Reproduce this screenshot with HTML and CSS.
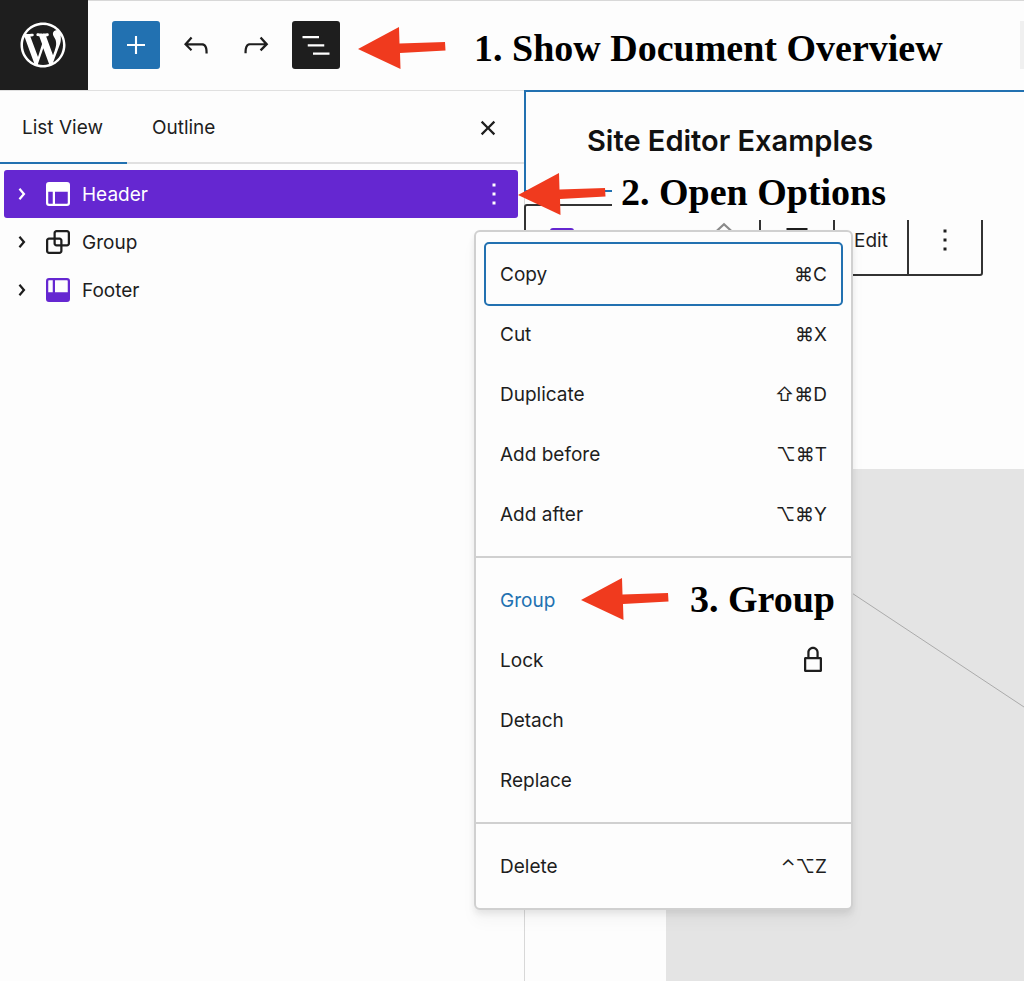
FILE: index.html
```html
<!DOCTYPE html>
<html lang="en">
<head>
<meta charset="utf-8">
<meta name="viewport" content="width=device-width, initial-scale=1">
<title>Site Editor</title>
<link rel="stylesheet" href="styles.css">
</head>
<body>
<svg class="defs" aria-hidden="true">
  <symbol id="chevron" viewBox="0 0 24 24"><path d="M10.86 8.04 14.28 12.03 10.86 16.02 9.72 15.04 12.3 12.03 9.72 9.02Z"/></symbol>
  <symbol id="header" viewBox="0 0 24 24"><path fill-rule="evenodd" d="M18.5 10.5H10v8h8a.5.5 0 00.5-.5v-7.5zm-10 0h-3V18a.5.5 0 00.5.5h2.5v-8zM6 4h12a2 2 0 012 2v12a2 2 0 01-2 2H6a2 2 0 01-2-2V6a2 2 0 012-2z"/></symbol>
  <symbol id="more" viewBox="0 0 24 24"><path d="M13 19h-2v-2h2v2zm0-6h-2v-2h2v2zm0-6h-2V5h2v2z"/></symbol>
  <symbol id="arrow" viewBox="0 0 88 42"><path d="M0 22 41 0 41.500 16.500 87 15 87.500 23.500 42 26 42.500 42Z"/></symbol>
</svg>
<div class="app">
  <header class="topbar">
    <a class="logo" href="#" aria-label="WordPress">
      <svg viewBox="-2 -2 24 24"><path d="M20 10c0-5.51-4.49-10-10-10C4.48 0 0 4.49 0 10c0 5.52 4.48 10 10 10 5.51 0 10-4.48 10-10zM7.78 15.37L4.37 6.22c.55-.02 1.17-.08 1.17-.08.5-.06.44-1.13-.06-1.11 0 0-1.45.11-2.37.11-.18 0-.37 0-.58-.01C4.12 2.69 6.87 1.11 10 1.11c2.33 0 4.45.87 6.05 2.34-.68-.11-1.65.39-1.65 1.58 0 .74.45 1.36.9 2.1.35.61.55 1.36.55 2.46 0 1.49-1.4 5-1.4 5l-3.03-8.37c.54-.02.82-.17.82-.17.5-.05.44-1.25-.06-1.22 0 0-1.44.12-2.38.12-.87 0-2.33-.12-2.33-.12-.5-.03-.56 1.2-.06 1.22l.92.08 1.26 3.41zM17.41 10c.24-.64.74-1.87.43-4.25.7 1.29 1.05 2.71 1.05 4.25 0 3.29-1.73 6.24-4.4 7.78.97-2.59 1.94-5.2 2.92-7.78zM6.1 18.09C3.12 16.65 1.11 13.53 1.11 10c0-1.3.23-2.48.72-3.59C3.25 10.3 4.67 14.2 6.1 18.09zm4.03-6.63l2.58 6.98c-.86.29-1.76.45-2.71.45-.79 0-1.57-.11-2.29-.33.81-2.38 1.62-4.74 2.42-7.1z"/></svg>
    </a>
    <div class="tools">
      <button class="tool primary" aria-label="Add block"><svg class="icon" viewBox="0 0 24 24"><path d="M11.300 6h1.400v5.300H18v1.400h-5.300V18h-1.400v-5.300H6v-1.400h5.300z"/></svg></button>
      <button class="tool" aria-label="Undo"><svg class="icon" viewBox="0 0 24 24"><path d="M18.3 11.7c-.6-.6-1.4-.9-2.3-.9H6.700l2.900-3.300-1.100-1-4.500 5L8.500 16l1-1-2.700-2.700H16c.5 0 .9.2 1.300.5 1 1 1 3.400 1 4.500v.3h1.500v-.2c0-1.500 0-4.300-1.500-5.700z"/></svg></button>
      <button class="tool" aria-label="Redo"><svg class="icon" viewBox="0 0 24 24"><path d="M15.600 6.500l-1.100 1 2.900 3.300H8c-.9 0-1.700.3-2.300.9-1.400 1.500-1.400 4.200-1.400 5.600v.2h1.500v-.3c0-1.100 0-3.500 1-4.500.3-.3.7-.5 1.300-.5h9.200L14.500 15l1.100 1.100 4.600-4.600-4.600-5z"/></svg></button>
      <button class="tool pressed" aria-label="Document Overview"><svg class="icon" viewBox="0 0 24 24"><path d="M3 6h11v1.500H3V6Zm3.500 5.500h11V13h-11v-1.500ZM21 17H10v1.500h11V17Z"/></svg></button>
    </div>
    <div class="note note-overview"><svg class="arrow"><use href="#arrow"/></svg><span>1. Show Document Overview</span></div>
    <div class="title-field"></div>
  </header>

  <div class="workspace">
    <aside class="sidebar">
      <div class="tabs" role="tablist">
        <button class="tab active" role="tab" aria-selected="true">List View</button>
        <button class="tab" role="tab" aria-selected="false">Outline</button>
        <button class="close" aria-label="Close"><svg class="icon" viewBox="0 0 24 24"><path d="M12 13.060l3.712 3.713 1.061-1.060L13.061 12l3.712-3.712-1.060-1.060L12 10.938 8.288 7.227l-1.061 1.060L10.939 12l-3.712 3.712 1.060 1.061L12 13.061z"/></svg></button>
      </div>
      <ul class="blocks">
        <li class="block selected">
          <button class="block-link"><svg class="icon"><use href="#chevron"/></svg><svg class="icon"><use href="#header"/></svg><span>Header</span></button>
          <button class="block-more" aria-label="Options for Header"><svg class="icon"><use href="#more"/></svg></button>
        </li>
        <li class="block">
          <button class="block-link"><svg class="icon"><use href="#chevron"/></svg><svg class="icon" viewBox="0 0 24 24"><path d="M18 4h-7c-1.100 0-2 .9-2 2v3H6c-1.100 0-2 .9-2 2v7c0 1.100.9 2 2 2h7c1.100 0 2-.9 2-2v-3h3c1.100 0 2-.9 2-2V6c0-1.100-.9-2-2-2zm-4.500 14c0 .3-.2.5-.5.5H6c-.3 0-.5-.2-.5-.5v-7c0-.3.2-.5.5-.5h3V13c0 1.100.9 2 2 2h2.500v3zm0-4.500H11c-.3 0-.5-.2-.5-.5v-2.500H13c.3 0 .5.2.5.5v2.500zm5-.5c0 .3-.2.5-.5.5h-3V11c0-1.100-.9-2-2-2h-2.500V6c0-.3.2-.5.5-.5h7c.3 0 .5.2.5.5v7z"/></svg><span>Group</span></button>
        </li>
        <li class="block">
          <button class="block-link"><svg class="icon"><use href="#chevron"/></svg><svg class="icon purple" viewBox="0 0 24 24"><path fill-rule="evenodd" d="M18 5.500h-8v8h8.500V6a.5.5 0 00-.5-.5zm-9.500 8h-3V6a.5.5 0 01.5-.5h2.500v8zM6 4h12a2 2 0 012 2v12a2 2 0 01-2 2H6a2 2 0 01-2-2V6a2 2 0 012-2z"/></svg><span>Footer</span></button>
        </li>
      </ul>
    </aside>

    <main class="canvas">
      <div class="site-header"><h1>Site Editor Examples</h1></div>
      <div class="block-toolbar">
        <div class="segment wide">
          <svg class="icon purple"><use href="#header"/></svg>
          <svg class="icon mover" viewBox="0 0 24 24"><path d="M6 7 12 1.500 18 7"/></svg>
        </div>
        <button class="segment" aria-label="Align"><svg class="icon" viewBox="0 0 24 24"><path d="M5 4h14v1.500H5zM5 18.500h14V20H5z"/></svg></button>
        <button class="segment"><span>Edit</span></button>
        <button class="segment" aria-label="Options"><svg class="icon"><use href="#more"/></svg></button>
      </div>
      <div class="placeholder"><svg viewBox="0 0 358 512" preserveAspectRatio="xMinYMin slice"><path d="M0 1 358 238"/></svg></div>
    </main>
  </div>

  <div class="note note-options"><svg class="arrow"><use href="#arrow"/></svg><span>2. Open Options</span></div>

  <div class="menu" role="menu">
    <div class="menu-group">
      <button class="item focused" role="menuitem"><span>Copy</span><kbd>⌘C</kbd></button>
      <button class="item" role="menuitem"><span>Cut</span><kbd>⌘X</kbd></button>
      <button class="item" role="menuitem"><span>Duplicate</span><kbd>⇧⌘D</kbd></button>
      <button class="item" role="menuitem"><span>Add before</span><kbd>⌥⌘T</kbd></button>
      <button class="item" role="menuitem"><span>Add after</span><kbd>⌥⌘Y</kbd></button>
    </div>
    <div class="menu-group">
      <button class="item current" role="menuitem"><span>Group</span></button>
      <button class="item" role="menuitem"><span>Lock</span><svg class="icon lock" viewBox="0 0 24 24"><path fill-rule="evenodd" d="M17 10h-1.200V7c0-2.100-1.700-3.800-3.800-3.800-2.100 0-3.800 1.700-3.800 3.800v3H7c-.6 0-1 .4-1 1v8c0 .6.4 1 1 1h10c.6 0 1-.4 1-1v-8c0-.6-.4-1-1-1zm-7.300-3c0-1.300 1-2.300 2.300-2.300s2.300 1 2.300 2.300v3H9.700V7zm6.800 11.500h-9v-7h9v7z"/></svg></button>
      <button class="item" role="menuitem"><span>Detach</span></button>
      <button class="item" role="menuitem"><span>Replace</span></button>
    </div>
    <div class="menu-group">
      <button class="item" role="menuitem"><span>Delete</span><kbd>⌃⌥Z</kbd></button>
    </div>
    <div class="note note-group"><svg class="arrow"><use href="#arrow"/></svg><span>3. Group</span></div>
  </div>
</div>
</body>
</html>
```
FILE: styles.css
```css
:root {
  --ink: #1e1e1e;
  --paper: #fdfdfd;
  --blue: #2271b1;
  --purple: #6527d1;
  --line: #e0e0e0;
}

* { box-sizing: border-box; }

body {
  margin: 0;
  background: var(--paper);
  color: var(--ink);
  font-family: Inter, "Liberation Sans", sans-serif;
  font-size: 19px;
  line-height: 28px;
}

button {
  margin: 0;
  padding: 0;
  border: 0;
  background: none;
  color: inherit;
  font: inherit;
}

.defs { display: none; }

.icon {
  display: block;
  flex: none;
  width: 36px;
  height: 36px;
  fill: currentColor;
}

.purple { color: var(--purple); }

.app {
  position: relative;
  display: flex;
  flex-direction: column;
  min-height: 100vh;
  overflow: hidden;
}

/* Top bar */
.topbar {
  display: flex;
  align-items: center;
  height: 91px;
  padding-bottom: 1px;
  border-top: 1px solid #d8d8d8;
  border-bottom: 1px solid var(--line);
}

.logo {
  display: flex;
  align-items: center;
  justify-content: center;
  align-self: flex-start;
  flex: none;
  width: 88px;
  height: 90px;
  margin-top: -1px;
  padding-right: 2px;
  background: var(--ink);
}

.logo svg { width: 54px; height: 54px; fill: #fff; }

.tools { display: flex; gap: 12px; margin-left: 24px; }

.tool {
  display: flex;
  align-items: center;
  justify-content: center;
  width: 48px;
  height: 48px;
  border-radius: 3px;
}

.tool.primary { background: var(--blue); color: #fff; }
.tool.pressed { background: var(--ink); color: #fff; }

.title-field {
  flex: none;
  width: 4px;
  height: 48px;
  margin-left: auto;
  background: #f0f0f0;
}

/* Annotations */
.note {
  display: flex;
  align-items: center;
  color: #000;
  font-family: "Liberation Serif", serif;
  font-size: 38px;
  font-weight: 700;
  line-height: 44px;
  white-space: nowrap;
}

.arrow { flex: none; width: 88px; height: 42px; fill: #f03a1e; }

.note-overview { gap: 28px; margin-left: 18px; padding-top: 6px; }

.note-options {
  position: absolute;
  top: 168px;
  left: 518px;
  right: 0;
}

.note-options span {
  flex: 1;
  align-self: stretch;
  margin-left: 6px;
  padding: 2px 0 6px 9px;
  background: var(--paper);
}

.note-group { position: absolute; top: 345px; left: 105px; gap: 21px; }

/* Sidebar */
.workspace { display: flex; flex: 1; }

.sidebar {
  flex: 0 0 525px;
  border-right: 1px solid #d8d8d8;
}

.tabs {
  display: flex;
  height: 73px;
  border-bottom: 2px solid var(--line);
}

.tab { height: 73px; padding: 0 24px 0 22px; }
.tab + .tab { padding-left: 25px; }
.tab.active { box-shadow: inset 0 -2px var(--blue); }

.close { margin: 2px 18px 0 auto; }

.blocks { margin: 0; padding: 6px 6px 0 4px; list-style: none; }

.block {
  display: flex;
  align-items: center;
  height: 48px;
  border-radius: 3px;
}

.block.selected { background: var(--purple); color: #fff; }

.block-link { display: flex; flex: 1; align-items: center; }
.block-link span { margin-left: 6px; }
.block-more { padding-right: 6px; }

.block-link span,
.segment span,
.item span,
.item kbd { padding-top: 2px; }

/* Canvas */
.canvas {
  display: flex;
  flex: 1;
  flex-direction: column;
  min-width: 0;
  margin-left: -1px;
}

.site-header {
  height: 102px;
  margin-top: -1px;
  padding: 31px 0 0 61px;
  border: solid var(--blue);
  border-width: 2px 0 2px 2px;
}

.site-header h1 {
  margin: 0;
  color: #111;
  font-size: 29px;
  font-weight: 600;
  line-height: 36px;
  white-space: nowrap;
}

.block-toolbar {
  display: flex;
  align-self: flex-start;
  height: 72px;
  margin-top: 12px;
  border: 2px solid #333;
  border-radius: 3px;
}

.segment {
  display: flex;
  align-items: center;
  justify-content: center;
  width: 74px;
}

.segment + .segment { border-left: 2px solid #333; }

.segment.wide {
  justify-content: space-between;
  width: 233px;
  padding: 0 17px 0 18px;
}

.mover { fill: none; stroke: #8a8a8a; stroke-width: 1.5; }

.placeholder {
  flex: 1;
  margin: 193px 0 0 142px;
  background: #e4e4e4;
}

.placeholder svg { display: block; width: 100%; }
.placeholder path { stroke: #ababab; }

/* Options menu */
.menu {
  position: absolute;
  top: 230px;
  left: 474px;
  width: 379px;
  border: 2px solid #d0d0d0;
  border-radius: 6px;
  background: var(--paper);
  box-shadow: 0 4px 6px rgba(0, 0, 0, .08), 0 12px 16px rgba(0, 0, 0, .03);
}

.menu-group { padding: 12px 10px; }
.menu-group + .menu-group { border-top: 2px solid #d0d0d0; }

.item {
  display: flex;
  align-items: center;
  justify-content: space-between;
  width: 100%;
  height: 60px;
  padding: 0 14px;
  border-radius: 3px;
}

.item.focused { outline: 2px solid var(--blue); outline-offset: 0; }
.item.current { color: var(--blue); }
.item kbd { font: inherit; }

.lock { margin-right: -4px; }
```
